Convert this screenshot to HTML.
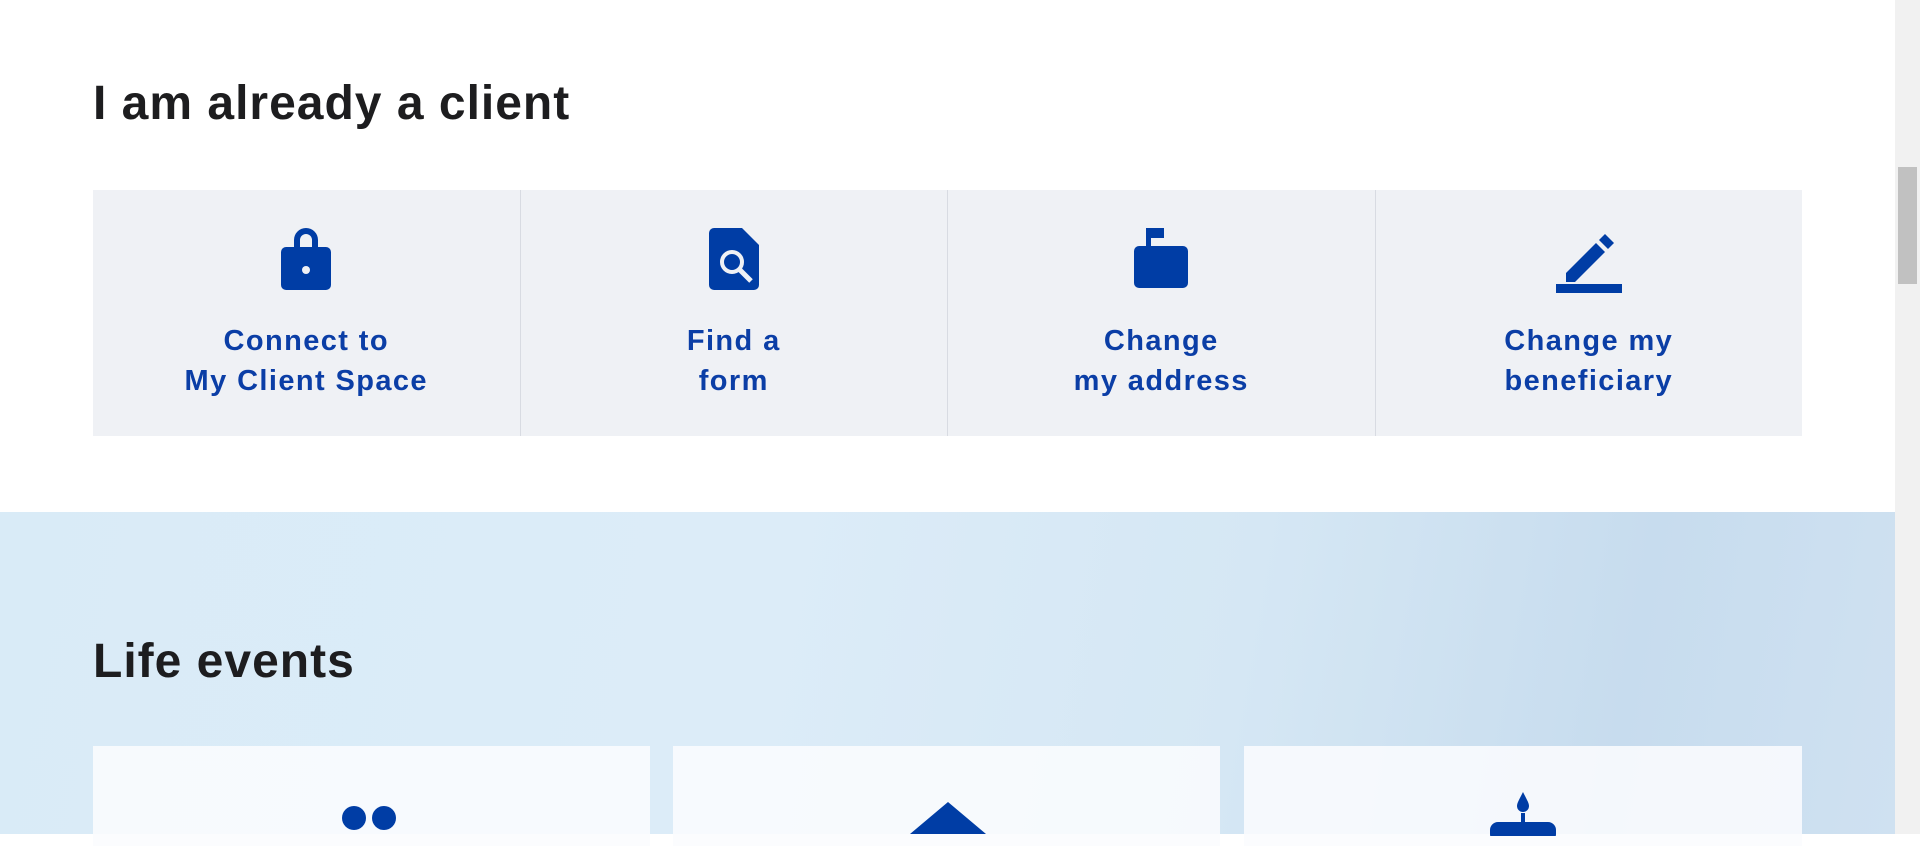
<!DOCTYPE html>
<html><head><meta charset="utf-8"><style>
*{margin:0;padding:0;box-sizing:border-box}
body{width:1920px;height:834px;overflow:hidden;background:#fff;font-family:"Liberation Sans",sans-serif;position:relative}
h2{position:absolute;left:93px;font-size:48px;font-weight:700;color:#1d1d1f;letter-spacing:1px}
.band{position:absolute;left:93px;top:190px;width:1709px;height:246px;background:#eff1f5;display:flex}
.cell{flex:1;border-right:1px solid #d8dbe2;position:relative;text-align:center}
.cell:last-child{border-right:none}
.cell svg{position:absolute;left:50%;transform:translateX(-50%);top:226px}
.cell .t{position:absolute;left:0;right:0;top:131px;font-size:29px;font-weight:700;color:#0b3ea6;line-height:40px;letter-spacing:1.4px}
.hero{position:absolute;left:0;top:512px;width:1895px;height:322px;background:linear-gradient(100deg,#d9ebf7 0%,#dcecf8 40%,#d5e7f4 65%,#c7dcee 85%,#cfe1f1 100%)}
.card{position:absolute;top:746px;height:100px;background:rgba(250,252,254,0.88)}
.sb{position:absolute;right:0;top:0;width:25px;height:834px;background:#f1f1f1}
.sb .th{position:absolute;left:3px;top:167px;width:19px;height:117px;background:#c1c1c1}
</style></head><body>
<h2 style="top:76px">I am already a client</h2>
<div class="band">
 <div class="cell">
  <svg style="top:36px" width="50" height="64" viewBox="0 0 50 64"><path d="M13 22V14a12 12 0 0 1 24 0v8h-6v-8a6 6 0 0 0-12 0v8z" fill="#003da5"/><rect x="0" y="21" width="50" height="43" rx="5" fill="#003da5"/><circle cx="25" cy="44" r="4" fill="#eff1f5"/></svg>
  <div class="t">Connect to<br>My Client Space</div></div>
 <div class="cell">
  <svg style="top:38px" width="50" height="62" viewBox="0 0 50 62"><path d="M5 0h28l17 17v40a5 5 0 0 1-5 5H5a5 5 0 0 1-5-5V5a5 5 0 0 1 5-5z" fill="#003da5"/><circle cx="23" cy="34" r="10" fill="none" stroke="#eff1f5" stroke-width="4"/><path d="M30 41l12 12" stroke="#eff1f5" stroke-width="5"/></svg>
  <div class="t">Find a<br>form</div></div>
 <div class="cell">
  <svg style="top:38px" width="54" height="60" viewBox="0 0 54 60"><rect x="0" y="18" width="54" height="42" rx="5" fill="#003da5"/><rect x="12" y="0" width="5" height="34" fill="#003da5"/><rect x="12" y="0" width="18" height="10" fill="#003da5"/><rect x="17" y="10" width="0" height="0"/></svg>
  <div class="t">Change<br>my address</div></div>
 <div class="cell">
  <svg style="top:39px" width="66" height="64" viewBox="0 0 66 64"><path d="M10 44l30-30 9 9-30 30H10z" fill="#003da5"/><path d="M43 11l6-6 9 9-6 6z" fill="#003da5"/><rect x="0" y="55" width="66" height="9" fill="#003da5"/></svg>
  <div class="t">Change my<br>beneficiary</div></div>
</div>
<div class="hero"></div>
<h2 style="top:634px">Life events</h2>
<div class="card" style="left:93px;width:557px"><svg style="position:absolute;left:248px;top:59px" width="60" height="30"><circle cx="13" cy="13" r="12" fill="#003da5"/><circle cx="43" cy="13" r="12" fill="#003da5"/></svg></div>
<div class="card" style="left:673px;width:547px"><svg style="position:absolute;left:237px;top:56px" width="76" height="40"><path d="M38 0L76 32H0z" fill="#003da5"/></svg></div>
<div class="card" style="left:1244px;width:558px"><svg style="position:absolute;left:246px;top:46px" width="66" height="44"><path d="M33 0c4 8 6 11 6 14a6 6 0 0 1-12 0c0-3 2-6 6-14z" fill="#003da5"/><rect x="31" y="21" width="4" height="12" fill="#003da5"/><rect x="0" y="30" width="66" height="20" rx="8" fill="#003da5"/></svg></div>
<div class="sb"><div class="th"></div></div>
</body></html>
